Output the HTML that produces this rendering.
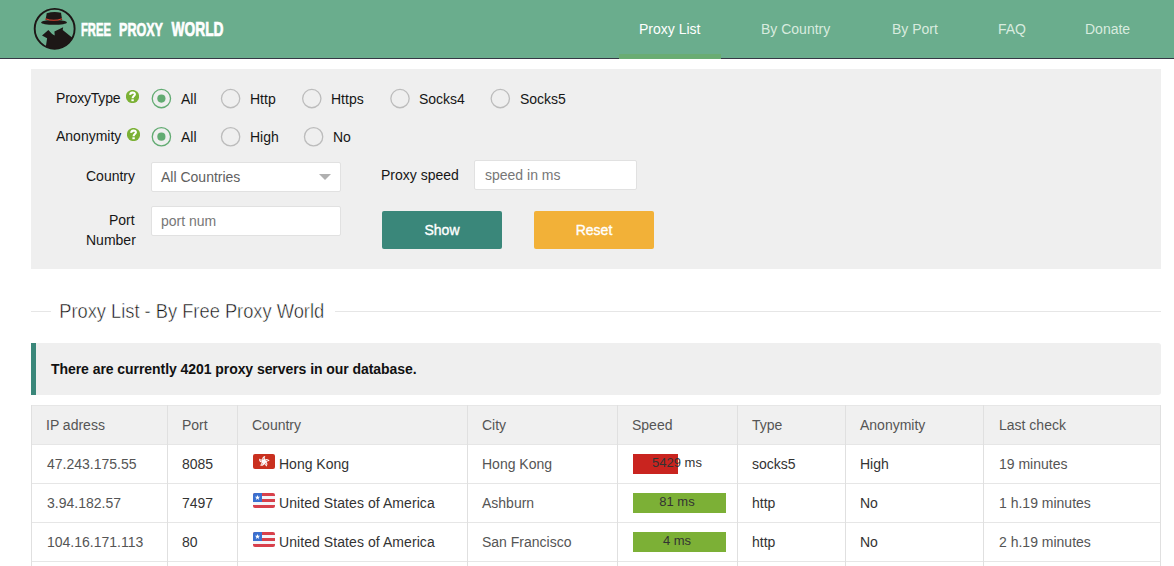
<!DOCTYPE html>
<html><head><meta charset="utf-8">
<style>
*{margin:0;padding:0;box-sizing:border-box}
html,body{width:1174px;height:566px;overflow:hidden;background:#fff;font-family:"Liberation Sans",sans-serif;font-size:14px;color:#161616}
.a{position:absolute}
.t{position:absolute;white-space:nowrap;line-height:16px;font-size:14px}
#hdr{left:0;top:0;width:1174px;height:58px;background:#6aad8d}
#hdrline{left:0;top:58px;width:1174px;height:1px;background:#363845}
.nav{color:#d8ebdf}
.navact{color:#fff}
#navul{left:619px;top:54px;width:102px;height:5px;background:#69ac72}
#panel{left:31px;top:69px;width:1130px;height:200px;background:#efefef}
.help{position:absolute;width:13px;height:13px;border-radius:50%;background:#7bb135;color:#fff;font-weight:bold;font-size:11px;line-height:13px;text-align:center}
.rad{position:absolute;width:19.6px;height:19.6px;border-radius:50%;border:1.3px solid #bcbcbc}
.rad.on{border:1.3px solid #62ab72}
.rad.on::after{content:"";position:absolute;left:4.5px;top:4.5px;width:8.2px;height:8.2px;border-radius:50%;background:#62ab72}
.inp{position:absolute;background:#fff;border:1px solid #e1e1e1;border-radius:2px}
.btn{position:absolute;border-radius:2px;color:#fff;text-align:center;font-size:14px;line-height:38px;-webkit-text-stroke:0.35px #fff}
.hl{position:absolute;background:#e6e6e6;height:1px}
.vl{position:absolute;background:#e0e0e0;width:1px}
.g{color:#555}
.d{color:#333}
</style></head><body>
<div id="hdr" class="a"></div>
<div id="hdrline" class="a"></div>
<div id="navul" class="a"></div>
<!-- logo -->
<svg class="a" style="left:32px;top:6px" width="45" height="45" viewBox="0 0 566 566">
<defs><clipPath id="cc"><circle cx="285" cy="287" r="250"/></clipPath></defs>
<circle cx="285" cy="287" r="251" fill="none" stroke="#1d1716" stroke-width="24"/>
<path d="M185 90 Q275 65 365 85 L380 178 L170 178 Z" fill="#1d1716"/>
<ellipse cx="277" cy="207" rx="162" ry="30" fill="#1d1716"/>
<path d="M168 160 Q275 200 378 160" fill="none" stroke="#d9432f" stroke-width="13"/>
<path clip-path="url(#cc)" d="M126 370 L206 303 L250 350 Q268 366 286 370 L282 322 L392 266 L386 303 L515 405 L560 600 L150 600 L176 500 L190 406 Z" fill="#1d1716"/>
</svg>
<svg class="a" style="left:78px;top:16px" width="150" height="26" viewBox="0 0 150 26">
<g fill="#fff" stroke="#fff" stroke-width="0.7" font-family="Liberation Sans" font-weight="bold">
<text x="3" y="19.7" font-size="19" textLength="30" lengthAdjust="spacingAndGlyphs">FREE</text>
<text x="41" y="19.7" font-size="19" textLength="44" lengthAdjust="spacingAndGlyphs">PROXY</text>
<text x="93.5" y="20.2" font-size="19.5" textLength="52" lengthAdjust="spacingAndGlyphs">WORLD</text>
</g></svg>
<div class="t navact" style="left:639px;top:21px">Proxy List</div>
<div class="t nav" style="left:761px;top:21px">By Country</div>
<div class="t nav" style="left:892px;top:21px">By Port</div>
<div class="t nav" style="left:998px;top:21px">FAQ</div>
<div class="t nav" style="left:1085px;top:21px">Donate</div>

<div id="panel" class="a"></div>
<svg class="a" style="left:150px;top:87px" width="22" height="22" viewBox="0 0 22 22"><circle cx="11.40" cy="11.60" r="9.15" fill="none" stroke="#62ab72" stroke-width="1.3"/><circle cx="11.40" cy="11.60" r="4.1" fill="#62ab72"/></svg><svg class="a" style="left:219px;top:87px" width="22" height="22" viewBox="0 0 22 22"><circle cx="11.60" cy="11.60" r="9.15" fill="none" stroke="#bcbcbc" stroke-width="1.3"/></svg><svg class="a" style="left:300px;top:87px" width="22" height="22" viewBox="0 0 22 22"><circle cx="11.80" cy="11.60" r="9.15" fill="none" stroke="#bcbcbc" stroke-width="1.3"/></svg><svg class="a" style="left:389px;top:87px" width="22" height="22" viewBox="0 0 22 22"><circle cx="11.00" cy="11.60" r="9.15" fill="none" stroke="#bcbcbc" stroke-width="1.3"/></svg><svg class="a" style="left:489px;top:87px" width="22" height="22" viewBox="0 0 22 22"><circle cx="11.30" cy="11.60" r="9.15" fill="none" stroke="#bcbcbc" stroke-width="1.3"/></svg><svg class="a" style="left:150px;top:125px" width="22" height="22" viewBox="0 0 22 22"><circle cx="11.40" cy="11.70" r="9.15" fill="none" stroke="#62ab72" stroke-width="1.3"/><circle cx="11.40" cy="11.70" r="4.1" fill="#62ab72"/></svg><svg class="a" style="left:219px;top:125px" width="22" height="22" viewBox="0 0 22 22"><circle cx="11.60" cy="11.70" r="9.15" fill="none" stroke="#bcbcbc" stroke-width="1.3"/></svg><svg class="a" style="left:302px;top:125px" width="22" height="22" viewBox="0 0 22 22"><circle cx="11.60" cy="11.70" r="9.15" fill="none" stroke="#bcbcbc" stroke-width="1.3"/></svg>
<div class="t" style="left:56px;top:90px;letter-spacing:-0.2px">ProxyType</div>
<svg class="a" style="left:126px;top:90px" width="13" height="13" viewBox="0 0 13 13"><circle cx="6.5" cy="6.5" r="6.6" fill="#7bb135"/><path d="M4.3 4.9C4.1 2.2 8.9 1.7 8.9 4.3C8.9 6 6.6 6.2 6.6 8.2" stroke="#fff" stroke-width="2.1" fill="none"/><path d="M5.4 9.3H7.8V11.2H5.4Z" fill="#fff"/></svg>
<div class="t" style="left:181px;top:91px">All</div>
<div class="t" style="left:250px;top:91px">Http</div>
<div class="t" style="left:331px;top:91px">Https</div>
<div class="t" style="left:419px;top:91px">Socks4</div>
<div class="t" style="left:520px;top:91px">Socks5</div>

<div class="t" style="left:56px;top:128px">Anonymity</div>
<svg class="a" style="left:127px;top:128px" width="13" height="13" viewBox="0 0 13 13"><circle cx="6.5" cy="6.5" r="6.6" fill="#7bb135"/><path d="M4.3 4.9C4.1 2.2 8.9 1.7 8.9 4.3C8.9 6 6.6 6.2 6.6 8.2" stroke="#fff" stroke-width="2.1" fill="none"/><path d="M5.4 9.3H7.8V11.2H5.4Z" fill="#fff"/></svg>
<div class="t" style="left:181px;top:129px">All</div>
<div class="t" style="left:250px;top:129px">High</div>
<div class="t" style="left:333px;top:129px">No</div>

<div class="t" style="left:86px;top:168px">Country</div>
<div class="inp" style="left:151px;top:162px;width:190px;height:30px"></div>
<div class="t" style="left:161px;top:169px;color:#606060">All Countries</div>
<svg class="a" style="left:319px;top:174px" width="12" height="6"><path d="M0 0H12L6 6Z" fill="#b0b0b0"/></svg>

<div class="t" style="left:381px;top:167px">Proxy speed</div>
<div class="inp" style="left:474px;top:160px;width:163px;height:30px"></div>
<div class="t" style="left:485px;top:167px;color:#777">speed in ms</div>

<div class="t" style="left:109px;top:212px">Port</div>
<div class="t" style="left:86px;top:232px">Number</div>
<div class="inp" style="left:151px;top:206px;width:190px;height:30px"></div>
<div class="t" style="left:161px;top:213px;color:#777">port num</div>

<div class="btn" style="left:382px;top:211px;width:120px;height:38px;background:#3a877a">Show</div>
<div class="btn" style="left:534px;top:211px;width:120px;height:38px;background:#f2b138">Reset</div>

<!-- title -->
<div class="hl" style="left:31px;top:311px;width:20px"></div>
<svg class="a" style="left:55px;top:296px" width="280" height="30" viewBox="0 0 280 30"><text x="4.2" y="21.6" font-family="Liberation Sans" font-size="20" fill="#111" stroke="#fff" stroke-width="0.5" textLength="265" lengthAdjust="spacingAndGlyphs">Proxy List - By Free Proxy World</text></svg>
<div class="hl" style="left:335px;top:311px;width:826px"></div>

<!-- message -->
<div class="a" style="left:31px;top:343px;width:1130px;height:52px;background:#efefef;border-left:5px solid #3a877a;border-radius:0 3px 3px 0"></div>
<div class="t" style="left:51px;top:361px;font-weight:bold;color:#111;letter-spacing:-0.06px">There are currently 4201 proxy servers in our database.</div>

<!-- table -->
<div class="a" style="left:31px;top:405px;width:1130px;height:39px;background:#f0f0f0"></div>
<div class="hl" style="left:31px;top:405px;width:1130px"></div>
<div class="hl" style="left:31px;top:444px;width:1130px"></div>
<div class="hl" style="left:31px;top:483px;width:1130px"></div>
<div class="hl" style="left:31px;top:522px;width:1130px"></div>
<div class="hl" style="left:31px;top:561px;width:1130px"></div>
<div class="vl" style="left:31px;top:405px;height:161px"></div>
<div class="vl" style="left:167px;top:405px;height:161px"></div>
<div class="vl" style="left:237px;top:405px;height:161px"></div>
<div class="vl" style="left:467px;top:405px;height:161px"></div>
<div class="vl" style="left:617px;top:405px;height:161px"></div>
<div class="vl" style="left:737px;top:405px;height:161px"></div>
<div class="vl" style="left:845px;top:405px;height:161px"></div>
<div class="vl" style="left:983px;top:405px;height:161px"></div>
<div class="vl" style="left:1160px;top:405px;height:161px"></div>

<div class="t g" style="left:46px;top:417px">IP adress</div>
<div class="t g" style="left:182px;top:417px">Port</div>
<div class="t g" style="left:252px;top:417px">Country</div>
<div class="t g" style="left:482px;top:417px">City</div>
<div class="t g" style="left:632px;top:417px">Speed</div>
<div class="t g" style="left:752px;top:417px">Type</div>
<div class="t g" style="left:860px;top:417px">Anonymity</div>
<div class="t g" style="left:999px;top:417px">Last check</div>

<!-- row1 -->
<div class="t g" style="left:47px;top:456px">47.243.175.55</div>
<div class="t d" style="left:182px;top:456px">8085</div>
<svg class="a" style="left:253px;top:454px" width="22" height="15" viewBox="0 0 22 15"><rect width="22" height="15" rx="2" fill="#c9301f"/><g transform="rotate(8 11 7.5)"><path d="M11 7.6C8.0 6.8 8.2 2.6 11.6 1.9C10.4 3.8 13.4 5.6 11 7.6Z" fill="#fff"/><path d="M10.3 5.6L10.6 3.6" stroke="#c9301f" stroke-width="0.6"/></g><g transform="rotate(80 11 7.5)"><path d="M11 7.6C8.0 6.8 8.2 2.6 11.6 1.9C10.4 3.8 13.4 5.6 11 7.6Z" fill="#fff"/><path d="M10.3 5.6L10.6 3.6" stroke="#c9301f" stroke-width="0.6"/></g><g transform="rotate(152 11 7.5)"><path d="M11 7.6C8.0 6.8 8.2 2.6 11.6 1.9C10.4 3.8 13.4 5.6 11 7.6Z" fill="#fff"/><path d="M10.3 5.6L10.6 3.6" stroke="#c9301f" stroke-width="0.6"/></g><g transform="rotate(224 11 7.5)"><path d="M11 7.6C8.0 6.8 8.2 2.6 11.6 1.9C10.4 3.8 13.4 5.6 11 7.6Z" fill="#fff"/><path d="M10.3 5.6L10.6 3.6" stroke="#c9301f" stroke-width="0.6"/></g><g transform="rotate(296 11 7.5)"><path d="M11 7.6C8.0 6.8 8.2 2.6 11.6 1.9C10.4 3.8 13.4 5.6 11 7.6Z" fill="#fff"/><path d="M10.3 5.6L10.6 3.6" stroke="#c9301f" stroke-width="0.6"/></g></svg>
<div class="t d" style="left:279px;top:456px">Hong Kong</div>
<div class="t g" style="left:482px;top:456px">Hong Kong</div>
<div class="a" style="left:633px;top:454px;width:45px;height:20px;background:#c9241f"></div>
<div class="t d" style="left:633px;top:455px;width:88px;text-align:center;font-size:13px;color:#333">5429 ms</div>
<div class="t d" style="left:752px;top:456px">socks5</div>
<div class="t d" style="left:860px;top:456px">High</div>
<div class="t g" style="left:999px;top:456px">19 minutes</div>

<!-- row2 -->
<div class="t g" style="left:47px;top:495px">3.94.182.57</div>
<div class="t d" style="left:182px;top:495px">7497</div>
<svg class="a" style="left:253px;top:493px" width="22" height="15" viewBox="0 0 22 15"><defs><clipPath id="fc493"><rect width="22" height="15" rx="2"/></clipPath></defs><g clip-path="url(#fc493)"><rect width="22" height="15" fill="#f4f5f9"/><rect y="0" width="22" height="3" fill="#d8404b"/><rect y="6" width="22" height="3" fill="#d8404b"/><rect y="12" width="22" height="3" fill="#d8404b"/><rect width="9" height="9" fill="#3b70cf"/><path d="M4.5 1.9L5.2 3.8H7.1L5.6 5L6.2 6.9L4.5 5.8L2.8 6.9L3.4 5L1.9 3.8H3.8Z" fill="#fff"/></g></svg>
<div class="t d" style="left:279px;top:495px;letter-spacing:0.07px">United States of America</div>
<div class="t g" style="left:482px;top:495px">Ashburn</div>
<div class="a" style="left:633px;top:493px;width:93px;height:20px;background:#7cb036"></div>
<div class="t d" style="left:633px;top:494px;width:88px;text-align:center;font-size:13px;color:#333">81 ms</div>
<div class="t d" style="left:752px;top:495px">http</div>
<div class="t d" style="left:860px;top:495px">No</div>
<div class="t g" style="left:999px;top:495px">1 h.19 minutes</div>

<!-- row3 -->
<div class="t g" style="left:47px;top:534px">104.16.171.113</div>
<div class="t d" style="left:182px;top:534px">80</div>
<svg class="a" style="left:253px;top:532px" width="22" height="15" viewBox="0 0 22 15"><defs><clipPath id="fc532"><rect width="22" height="15" rx="2"/></clipPath></defs><g clip-path="url(#fc532)"><rect width="22" height="15" fill="#f4f5f9"/><rect y="0" width="22" height="3" fill="#d8404b"/><rect y="6" width="22" height="3" fill="#d8404b"/><rect y="12" width="22" height="3" fill="#d8404b"/><rect width="9" height="9" fill="#3b70cf"/><path d="M4.5 1.9L5.2 3.8H7.1L5.6 5L6.2 6.9L4.5 5.8L2.8 6.9L3.4 5L1.9 3.8H3.8Z" fill="#fff"/></g></svg>
<div class="t d" style="left:279px;top:534px;letter-spacing:0.07px">United States of America</div>
<div class="t g" style="left:482px;top:534px">San Francisco</div>
<div class="a" style="left:633px;top:532px;width:93px;height:20px;background:#7cb036"></div>
<div class="t d" style="left:633px;top:533px;width:88px;text-align:center;font-size:13px;color:#333">4 ms</div>
<div class="t d" style="left:752px;top:534px">http</div>
<div class="t d" style="left:860px;top:534px">No</div>
<div class="t g" style="left:999px;top:534px">2 h.19 minutes</div>
</body></html>
